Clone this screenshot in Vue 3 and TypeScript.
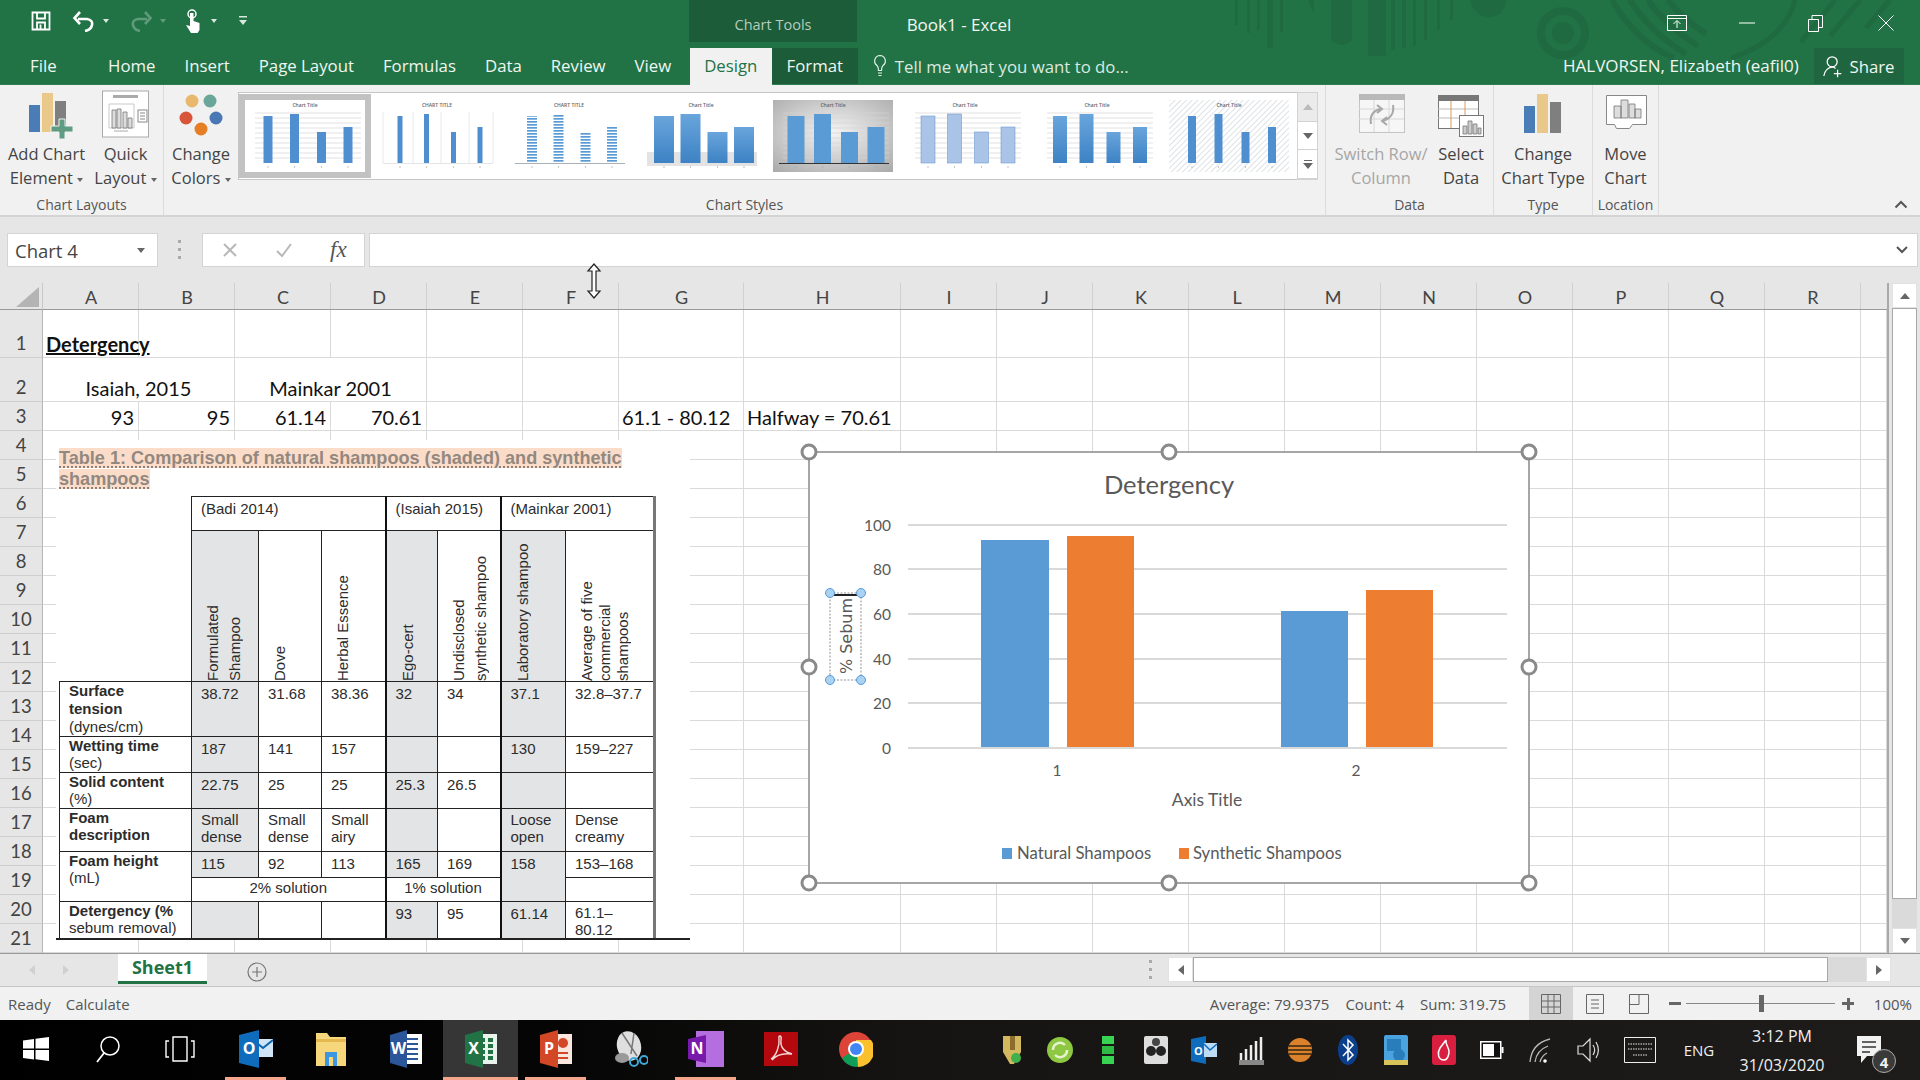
<script setup lang="ts">
interface Thumb {
  title: string
  barW: number
  fill: string
  stroke?: string
  bg: string
  hgrid?: boolean
  vgrid?: boolean
  base?: string
  shadow?: boolean
  selected?: boolean
}

const thumbs: Thumb[] = [
  { title: 'Chart Title', barW: 9, fill: '#4f8fd0', bg: '#fff', hgrid: true, selected: true },
  { title: 'CHART TITLE', barW: 5, fill: '#4f8fd0', bg: '#fff', vgrid: true, base: '#e4e4e4' },
  { title: 'CHART TITLE', barW: 10, fill: 'url(#stripes)', bg: '#fff', base: '#a8b0b8' },
  { title: 'Chart Title', barW: 20, fill: 'url(#barGrad)', bg: '#fff', shadow: true },
  { title: 'Chart Title', barW: 17, fill: '#5b9bd5', bg: 'url(#greyBg)', hgrid: true, base: '#333' },
  { title: 'Chart Title', barW: 14, fill: '#a9c4e6', stroke: '#6f9bd0', bg: '#fff', hgrid: true },
  { title: 'Chart Title', barW: 14, fill: 'url(#barGrad)', bg: '#fff', hgrid: true },
  { title: 'Chart Title', barW: 8, fill: '#4f8fd0', bg: 'url(#hatch)' },
]
const barX = [23, 49.5, 76.5, 103]
const barH = [47, 49, 31, 36]
const thumbGrid = [13, 18, 23, 28, 33, 38, 43, 48, 53, 58]

const colW = ['A', 'B', 'C', 'D', 'E', 'F', 'G', 'H', 'I', 'J', 'K', 'L', 'M', 'N', 'O', 'P', 'Q', 'R', '']
const headers = colW.map((c, i) => ({ c, i }))

const content: Record<string, { t: string; cls?: string }> = {
  'A1': { t: 'Detergency', cls: 'heading' },
  'A2': { t: 'Isaiah, 2015', cls: 'across' },
  'C2': { t: 'Mainkar 2001', cls: 'across' },
  'A3': { t: '93', cls: 'num' },
  'B3': { t: '95', cls: 'num' },
  'C3': { t: '61.14', cls: 'num' },
  'D3': { t: '70.61', cls: 'num' },
  'G3': { t: '61.1 - 80.12' },
  'H3': { t: 'Halfway = 70.61' },
}

const rows = Array.from({ length: 21 }, (_, r) => {
  const num = r + 1
  const cells = colW
    .map((c, i) => ({ key: `${c || 'S'}${num}`, i, ...(content[`${c}${num}`] ?? { t: '' }) }))
    .filter((cell) => !(num === 2 && (cell.i === 1 || cell.i === 3)))
  return { num, cells }
})

const gridY = [525, 569, 614, 659, 703, 748]
const handles = [
  [809, 452], [1169, 452], [1529, 452],
  [809, 667], [1529, 667],
  [809, 883], [1169, 883], [1529, 883],
]
const axisLabels = [
  { v: '100', y: 531 }, { v: '80', y: 575 }, { v: '60', y: 620 },
  { v: '40', y: 665 }, { v: '20', y: 709 }, { v: '0', y: 754 },
]
const bars = [
  { x: 981, w: 68, y: 540, fill: '#5b9bd5' },
  { x: 1067, w: 67, y: 536, fill: '#ed7d31' },
  { x: 1281, w: 67, y: 611, fill: '#5b9bd5' },
  { x: 1366, w: 67, y: 590, fill: '#ed7d31' },
]
const titleHandles = [[830, 593], [861, 593], [830, 680], [861, 680]]

const tableRows = [
  { label: 'Wetting time (sec)', vals: ['187', '141', '157', '', '', '130', '159–227'], cls: 'r-wet' },
  { label: 'Solid content (%)', vals: ['22.75', '25', '25', '25.3', '26.5', '', ''], cls: 'r-solid' },
]
const headCols = [
  { lines: ['Formulated', 'Shampoo'], grey: true },
  { lines: ['Dove'], grey: false },
  { lines: ['Herbal Essence'], grey: false, thick: true },
  { lines: ['Ego-cert'], grey: true },
  { lines: ['Undisclosed', 'synthetic shampoo'], grey: false, thick: true },
  { lines: ['Laboratory shampoo'], grey: true },
  { lines: ['Average of five', 'commercial', 'shampoos'], grey: false },
]
const isGrey = (i: number) => i === 0 || i === 3 || i === 5
const isThick = (i: number) => i === 2 || i === 4

const trayStart = ['shield', 'sync', 'bars']
</script>

<template>
  <div class="app">
    <div class="head">
      <svg class="pattern" viewBox="1200 0 720 85" width="720" height="85">
        <g fill="#1f6a40">
          <rect x="1235" width="3" height="25" /><rect x="1247" width="3" height="33" />
          <rect x="1257" width="3" height="30" /><rect x="1267" width="6" height="48" />
          <rect x="1280" width="3" height="32" /><path d="M1308 0h6v14z" />
          <path d="M1331 0h21v40q-10 10-21 0z" /><rect x="1368" width="18" height="56" />
          <rect x="1391" width="4" height="50" /><rect x="1402" width="4" height="48" />
          <rect x="1413" width="3" height="46" /><rect x="1424" width="3" height="40" />
          <rect x="1437" width="3" height="30" /><rect x="1450" width="3" height="20" />
          <path d="M1470 0h37q-4 17-18 17t-19-17z" />
          <circle cx="1563" cy="33" r="11" />
        </g>
        <g fill="none" stroke="#1f6a40">
          <circle cx="1563" cy="33" r="22" stroke-width="8" />
          <path d="M1612 0q24 42 62 58M1630 0q20 32 56 54M1648 0q16 24 50 46M1668 0q12 16 38 34" stroke-width="6" />
          <path d="M1795 0q-10 40-64 58M1835 0l-34 42M1860 0l-30 36M1890 0l-24 28" stroke-width="5" />
        </g>
      </svg>
      <!-- title bar -->
      <header class="titlebar">
        <div class="qat">
          <svg class="qi" viewBox="0 0 22 22" width="22" height="22"><path d="M2.500 2.500h17v17h-17zM7 2.500v6h8v-6M7 19.500v-7h8v7M10.500 14.500v5" fill="none" stroke="#fff" stroke-width="1.800" /></svg>
          <svg class="qi-undo" viewBox="0 0 24 22" width="24" height="22"><path d="M6 9h9q6 1 5 6t-7 6M8 2L2.500 8 8 14" fill="none" stroke="#fff" stroke-width="2.600" /></svg>
          <i class="caret" />
          <svg class="qi-undo" viewBox="0 0 24 22" width="24" height="22"><path d="M18 9H9q-6 1-5 6t7 6M16 2l5.500 6L16 14" fill="none" stroke="#5f9b7b" stroke-width="2.600" /></svg>
          <i class="caret dim" />
          <svg class="qi-touch" viewBox="0 0 20 26" width="20" height="26"><circle cx="8" cy="6" r="4" fill="none" stroke="#fff" stroke-width="1.500" /><path d="M6 5h3.500v8l6 2v7l-2 3H7l-5-8 4 1z" fill="#fff" /></svg>
          <i class="caret" />
          <svg class="qi-more" viewBox="0 0 10 12" width="10" height="12"><path d="M1 1h8v1.500H1zM1 5h8L5 10z" fill="#d8e8de" /></svg>
        </div>
        <div class="context-head">Chart Tools</div>
        <div class="doc-title">Book1 - Excel</div>
        <div class="winctl">
          <svg viewBox="0 0 20 16" width="20" height="16"><path d="M.5.500h19v15H.5zM.5 3.500h19M10 13V6M6.500 9L10 5.500 13.500 9" fill="none" stroke="#fff" /></svg>
          <svg class="wc-min" viewBox="0 0 16 2" width="16" height="2"><path d="M0 1h16" stroke="#dcebe2" stroke-width="1.200" /></svg>
          <svg class="wc-res" viewBox="0 0 15 17" width="15" height="17"><path d="M.5 4.500h10v12H.5zM4 4.500V.5h10.500v12h-4" fill="none" stroke="#fff" /></svg>
          <svg class="wc-close" viewBox="0 0 16 16" width="16" height="16"><path d="M.5.500l15 15M15.500.500l-15 15" stroke="#fff" stroke-width="1" /></svg>
        </div>
      </header>

      <!-- tabs -->
      <nav class="tabs">
        <span class="tab file">File</span>
        <span class="tab">Home</span>
        <span class="tab">Insert</span>
        <span class="tab">Page Layout</span>
        <span class="tab">Formulas</span>
        <span class="tab">Data</span>
        <span class="tab">Review</span>
        <span class="tab">View</span>
        <span class="tab design">Design</span>
        <span class="tab format">Format</span>
        <span class="tell">
          <svg viewBox="0 0 14 24" width="14" height="24"><path d="M7 1.500a5.500 5.500 0 0 0-3 10c1 1 1.500 2.500 1.500 5h3c0-2.500.5-4 1.500-5a5.500 5.500 0 0 0-3-10zM5 19h4M5.500 21.500h3" fill="none" stroke="#e4f0e9" stroke-width="1.200" /></svg>
          Tell me what you want to do...
        </span>
        <span class="user">HALVORSEN, Elizabeth (eafil0)</span>
        <span class="share">
          <svg viewBox="0 0 24 28" width="24" height="28"><circle cx="11" cy="9" r="6" fill="none" stroke="#fff" stroke-width="1.500" /><path d="M1 26c1-7 5-10 10-11 2 0 3 1 4 2M13 23h9M17.500 18.500v9" fill="none" stroke="#fff" stroke-width="1.500" /></svg>
          Share
        </span>
      </nav>
    </div>

    <!-- ribbon -->
    <section class="ribbon">
      <div class="grp g-layouts">
        <div class="grp-body">
          <div class="rb w-add">
            <svg class="rb-ic" viewBox="20 92 52 48" width="52" height="48">
              <rect x="28" y="107" width="11" height="27" fill="#4a7db5" /><rect x="41" y="95" width="11" height="39" fill="#eac88a" /><rect x="54" y="103" width="11" height="31" fill="#7f7f7f" />
              <path d="M58 121h6v7h8v6h-8v7h-6v-7h-8v-6h8z" fill="#5e9c83" stroke="#f1f1f1" />
            </svg>
            <span>Add Chart<br />Element <i class="dd" /></span>
          </div>
          <div class="rb w-quick">
            <svg class="rb-ic" viewBox="101 90 48 48" width="48" height="48">
              <rect x="101.500" y="91" width="46" height="46" fill="#fff" stroke="#aaa" />
              <rect x="112" y="95" width="25" height="3" fill="#aaa" />
              <path d="M108 104h25v24h-25z" fill="none" stroke="#bbb" stroke-width=".8" />
              <path d="M111 110h4v18h-4zM116 109h4v19h-4zM122 112h4v16h-4zM127 118h4v10h-4z" fill="#ddd" stroke="#777" stroke-width=".8" />
              <rect x="137" y="110" width="9" height="12" fill="#fff" stroke="#888" /><path d="M139 113h5M139 116h5M139 119h5" stroke="#888" />
              <path d="M113 131h14" stroke="#aaa" />
            </svg>
            <span>Quick<br />Layout <i class="dd" /></span>
          </div>
        </div>
        <div class="grp-label">Chart Layouts</div>
      </div>

      <div class="grp g-styles">
        <div class="grp-body">
          <div class="rb w-colors">
            <svg class="rb-ic" viewBox="180 90 46 48" width="46" height="48">
              <circle cx="194" cy="101" r="6.500" fill="#e8b96c" /><circle cx="212" cy="101" r="6.500" fill="#6aa79a" />
              <circle cx="188" cy="118" r="6.500" fill="#d9553a" /><circle cx="218" cy="118" r="6.500" fill="#4a78b5" />
              <circle cx="203" cy="129" r="6.500" fill="#e57e25" />
            </svg>
            <span>Change<br />Colors <i class="dd" /></span>
          </div>
          <div class="gallery">
            <div class="gallery-items">
              <div v-for="(t, i) in thumbs" :key="i" class="thumb-wrap" :class="{ selected: t.selected }">
                <svg class="thumb" viewBox="0 0 120 72" width="120" height="72">
                  <rect width="120" height="72" :fill="t.bg" />
                  <text x="60" y="7" text-anchor="middle" class="thumb-title">{{ t.title }}</text>
                  <rect v-if="t.shadow" x="6" y="52" width="110" height="14" fill="#e3e3e3" />
                  <template v-if="t.hgrid">
                    <line v-for="g in thumbGrid" :key="g" x1="10" x2="116" :y1="g" :y2="g" stroke="#d4d4d4" stroke-width=".7" />
                  </template>
                  <template v-if="t.vgrid">
                    <line v-for="x in [6, 36, 64, 92, 116]" :key="x" :x1="x" :x2="x" y1="12" y2="63" stroke="#e2e2e2" stroke-width=".8" />
                  </template>
                  <rect v-for="(x, b) in barX" :key="b" :x="x - t.barW / 2" :y="63 - barH[b]" :width="t.barW" :height="barH[b]" :fill="t.fill" :stroke="t.stroke" stroke-width=".6" />
                  <line v-if="t.base" x1="6" x2="116" y1="63.500" y2="63.500" :stroke="t.base" stroke-width="1.200" />
                  <circle v-for="(x, b) in barX" :key="'d' + b" :cx="x" cy="67" r=".7" fill="#aaa" />
                </svg>
              </div>
            </div>
            <div class="gallery-scroll">
              <span class="gs up"><i class="tri-up" /></span>
              <span class="gs"><i class="tri-down" /></span>
              <span class="gs"><i class="more" /><i class="tri-down" /></span>
            </div>
          </div>
        </div>
        <div class="grp-label">Chart Styles</div>
      </div>

      <div class="grp g-data">
        <div class="grp-body">
          <div class="rb w-switch disabled">
            <svg class="rb-ic" viewBox="1355 92 50 46" width="50" height="46">
              <rect x="1358.500" y="95.500" width="45" height="38" fill="#f6f6f6" stroke="#c4c4c4" />
              <rect x="1358" y="95" width="46" height="6" fill="#b9b9b9" />
              <path d="M1358 110h45M1358 120h45M1373 101v32M1388 101v32" stroke="#d8d8d8" />
              <path d="M1370 125q-2-12 9-15M1392 106q2 12-10 16M1376 106l5 4-5 4M1386 118l-5 4 5 4" fill="none" stroke="#a8a8a8" stroke-width="2" />
            </svg>
            <span>Switch Row/<br />Column</span>
          </div>
          <div class="rb w-select">
            <svg class="rb-ic" viewBox="1438 92 50 48" width="50" height="48">
              <rect x="1440.500" y="97.500" width="40" height="33" fill="#fff" stroke="#777" />
              <rect x="1440" y="97" width="41" height="6" fill="#777" />
              <path d="M1440 111h40M1440 120h40" stroke="#bbb" /><path d="M1453 103v27M1467 103v27" stroke="#d89a5a" />
              <rect x="1461.500" y="117.500" width="24" height="21" fill="#fff" stroke="#777" />
              <path d="M1465 136v-8h4v8zM1470 136v-13h4v13zM1475 136v-10h4v10zM1480 136v-6h3v6z" fill="#ccc" stroke="#777" stroke-width=".8" />
            </svg>
            <span>Select<br />Data</span>
          </div>
        </div>
        <div class="grp-label">Data</div>
      </div>

      <div class="grp g-type">
        <div class="grp-body">
          <div class="rb w-type">
            <svg class="rb-ic" viewBox="1520 92 46 46" width="46" height="46">
              <rect x="1524" y="107" width="11" height="27" fill="#4a7db5" /><rect x="1537" y="95" width="11" height="39" fill="#eac88a" /><rect x="1550" y="103" width="11" height="31" fill="#7f7f7f" />
            </svg>
            <span>Change<br />Chart Type</span>
          </div>
        </div>
        <div class="grp-label">Type</div>
      </div>

      <div class="grp g-loc">
        <div class="grp-body">
          <div class="rb w-move">
            <svg class="rb-ic" viewBox="1602 94 46 44" width="46" height="44">
              <path d="M1605.500 97.500h40v29h-14l-3 4h-13l-2-4h-8z" fill="#fff" stroke="#888" />
              <path d="M1613 120v-12h7v12zM1620 120v-18h7v18zM1628 120v-14h6v14zM1634 120v-9h6v9z" fill="#ddd" stroke="#777" stroke-width=".8" />
            </svg>
            <span>Move<br />Chart</span>
          </div>
        </div>
        <div class="grp-label">Location</div>
      </div>
      <svg class="collapse" viewBox="0 0 14 10" width="14" height="10"><path d="M1.500 8.500L7 3l5.500 5.500" fill="none" stroke="#555" stroke-width="2" /></svg>
    </section>

    <!-- formula bar -->
    <section class="formula">
      <div class="namebox"><span>Chart 4</span><i class="tri-down" /></div>
      <span class="dots" />
      <div class="fx-btns">
        <svg viewBox="0 0 16 16" width="16" height="16"><path d="M2 2l12 12M14 2L2 14" stroke="#b8b8b8" stroke-width="2" /></svg>
        <svg viewBox="0 0 18 16" width="18" height="16"><path d="M2 9l5 5L16 2" fill="none" stroke="#b8b8b8" stroke-width="2" /></svg>
        <span class="fx">fx</span>
      </div>
      <div class="fx-input">
        <svg viewBox="0 0 12 8" width="12" height="8"><path d="M1 1l5 5 5-5" fill="none" stroke="#555" stroke-width="2" /></svg>
      </div>
    </section>

    <!-- grid -->
    <section class="sheet-area">
      <div class="sheet">
        <div class="corner"><i /></div>
        <div v-for="h in headers" :key="'h' + h.i" class="colhead">{{ h.c }}</div>
        <template v-for="row in rows" :key="row.num">
          <div class="rowhead">{{ row.num }}</div>
          <div
            v-for="cell in row.cells"
            :key="cell.key"
            class="cell"
            :class="cell.cls"
          ><span>{{ cell.t }}</span></div>
        </template>
      </div>
      <div class="vscroll">
        <span class="sb-btn"><i class="tri-up" /></span>
        <span class="sb-thumb" />
        <span class="sb-track" />
        <span class="sb-btn"><i class="tri-down" /></span>
      </div>

      <!-- pasted picture -->
      <div class="picture">
        <p class="caption"><mark>Table 1: Comparison of natural shampoos (shaded) and synthetic<br />shampoos</mark></p>
        <table class="paper">
          <colgroup>
            <col class="c0" /><col class="c1" /><col class="c2" /><col class="c3" /><col class="c4" /><col class="c5" /><col class="c6" /><col class="c7" />
          </colgroup>
          <tbody>
            <tr class="r-a">
              <td rowspan="2" class="blank" />
              <td colspan="3" class="thick">(Badi 2014)</td>
              <td colspan="2" class="thick">(Isaiah 2015)</td>
              <td colspan="2">(Mainkar 2001)</td>
            </tr>
            <tr class="r-b">
              <td v-for="(h, i) in headCols" :key="i" class="rot" :class="{ grey: h.grey, thick: h.thick }">
                <div class="rot-in" :class="{ wide: h.lines.length === 2 }"><span v-for="l in h.lines" :key="l">{{ l }}</span></div>
              </td>
            </tr>
            <tr class="r-surface">
              <th>Surface<br />tension<br /><em>(dynes/cm)</em></th>
              <td class="grey">38.72</td><td>31.68</td><td class="thick">38.36</td><td class="grey">32</td><td class="thick">34</td><td class="grey">37.1</td><td>32.8–37.7</td>
            </tr>
            <tr v-for="tr in tableRows" :key="tr.label" :class="tr.cls">
              <th>{{ tr.label.split(' (')[0] }}<br /><em>({{ tr.label.split(' (')[1] }}</em></th>
              <td v-for="(v, i) in tr.vals" :key="i" :class="{ grey: isGrey(i), thick: isThick(i) }">{{ v }}</td>
            </tr>
            <tr class="r-foam">
              <th>Foam<br />description</th>
              <td class="grey two">Small<br />dense</td><td class="two">Small<br />dense</td><td class="thick two">Small<br />airy</td><td class="grey" /><td class="thick" /><td class="grey two">Loose<br />open</td><td class="two">Dense<br />creamy</td>
            </tr>
            <tr class="r-height">
              <th rowspan="2">Foam height<br /><em>(mL)</em></th>
              <td class="grey">115</td><td>92</td><td class="thick">113</td><td class="grey">165</td><td class="thick">169</td><td rowspan="2" class="grey">158</td><td>153–168</td>
            </tr>
            <tr class="r-sol">
              <td colspan="3" class="thick ctr">2% solution</td><td colspan="2" class="thick ctr">1% solution</td><td />
            </tr>
            <tr class="r-det">
              <th>Detergency (%<br /><em>sebum removal)</em></th>
              <td class="grey" /><td /><td class="thick" /><td class="grey">93</td><td class="thick">95</td><td class="grey">61.14</td><td class="two">61.1–<br />80.12</td>
            </tr>
          </tbody>
        </table>
      </div>

      <!-- chart object -->
      <svg class="chart" viewBox="790 432 760 470" width="760" height="470">
        <rect x="809" y="452" width="720" height="431" fill="#fff" stroke="#a6a6a6" stroke-width="2" />
        <text x="1169" y="494" text-anchor="middle" class="c-title">Detergency</text>
        <line v-for="y in gridY" :key="y" x1="908" x2="1507" :y1="y" :y2="y" stroke="#d9d9d9" stroke-width="2" />
        <text v-for="a in axisLabels" :key="a.v" x="891" :y="a.y" text-anchor="end" class="c-tick">{{ a.v }}</text>
        <rect v-for="b in bars" :key="b.x" :x="b.x" :y="b.y" :width="b.w" :height="747 - b.y" :fill="b.fill" />
        <text x="1057" y="776" text-anchor="middle" class="c-tick">1</text>
        <text x="1356" y="776" text-anchor="middle" class="c-tick">2</text>
        <text x="1207" y="806" text-anchor="middle" class="c-axis">Axis Title</text>
        <rect x="1002" y="848" width="10" height="11" fill="#5b9bd5" />
        <text x="1017" y="859" class="c-legend">Natural Shampoos</text>
        <rect x="1179" y="848" width="10" height="11" fill="#ed7d31" />
        <text x="1193" y="859" class="c-legend">Synthetic Shampoos</text>
        <rect x="830" y="593" width="31" height="87" fill="none" stroke="#777" stroke-width=".8" stroke-dasharray="2 1.500" />
        <text x="851.500" y="636" text-anchor="middle" transform="rotate(-90 851.500 636)" class="c-sebum">% Sebum</text>
        <line x1="834" x2="857" y1="595" y2="595" stroke="#222" stroke-width="2" />
        <circle v-for="t in titleHandles" :key="t.join()" :cx="t[0]" :cy="t[1]" r="4.500" fill="#a9d2f3" stroke="#5b9bd5" />
        <circle v-for="h in handles" :key="h.join()" :cx="h[0]" :cy="h[1]" r="7" fill="#fff" stroke="#8a8a8a" stroke-width="3" />
      </svg>
    </section>

    <!-- sheet tabs -->
    <section class="sheetbar">
      <div class="tabnav"><i class="tri-left pale" /><i class="tri-right pale" /></div>
      <div class="sheettab">Sheet1</div>
      <svg class="addsheet" viewBox="0 0 20 20" width="20" height="20"><circle cx="10" cy="10" r="9" fill="none" stroke="#777" stroke-width="1.200" /><path d="M10 5v10M5 10h10" stroke="#777" stroke-width="1.200" /></svg>
      <div class="hscroll">
        <span class="hdots" />
        <span class="sb-btn h"><i class="tri-left" /></span>
        <span class="h-thumb" />
        <span class="h-track" />
        <span class="sb-btn h"><i class="tri-right" /></span>
      </div>
    </section>

    <!-- status bar -->
    <footer class="status">
      <span class="st-ready">Ready</span>
      <span class="st-calc">Calculate</span>
      <span class="st-stats">
        <span>Average: 79.9375</span><span>Count: 4</span><span>Sum: 319.75</span>
      </span>
      <span class="view active">
        <svg viewBox="0 0 20 20" width="20" height="20"><path d="M.5.500h19v19H.5zM.5 7h19M.5 13h19M7 .5v19M13 .5v19" fill="none" stroke="#666" /></svg>
      </span>
      <span class="view">
        <svg viewBox="0 0 18 20" width="18" height="20"><path d="M.5.500h17v19H.5zM5 6h8M5 10h8M5 14h8" fill="none" stroke="#666" /></svg>
      </span>
      <span class="view">
        <svg viewBox="0 0 20 20" width="20" height="20"><path d="M.5.500h19v19H.5zM10 .5v10H.5" fill="none" stroke="#666" /></svg>
      </span>
      <div class="zoom">
        <b class="z-minus" /><span class="z-track"><i class="z-thumb" /></span><b class="z-plus" />
      </div>
      <span class="pct">100%</span>
    </footer>

    <!-- task bar -->
    <footer class="taskbar">
      <div class="task-left">
        <span class="tb sys">
          <svg viewBox="0 0 26 24" width="26" height="24"><path d="M0 3.500l11-1.500v9.500H0zM12.500 1.800L26 0v11.500H12.500zM0 13h11v9.500L0 21zM12.500 13H26v11l-13.500-1.800z" fill="#fff" /></svg>
        </span>
        <span class="tb sys">
          <svg viewBox="0 0 26 28" width="26" height="28"><circle cx="15" cy="11" r="9" fill="none" stroke="#fff" stroke-width="1.500" /><path d="M9 18L2 27" stroke="#fff" stroke-width="1.800" /></svg>
        </span>
        <span class="tb sys">
          <svg viewBox="0 0 30 26" width="30" height="26"><path d="M8 1h14v24H8zM4 5H1v16h3M26 5h3v16h-3" fill="none" stroke="#fff" stroke-width="1.400" /></svg>
        </span>
        <span class="tb app-ic on first">
          <svg viewBox="0 0 34 38" width="34" height="38"><rect x="14" y="9" width="20" height="18" fill="#cfe4f7" /><path d="M14 10l10 8 10-8" fill="none" stroke="#0a64ad" stroke-width="2" /><path d="M0 5l20-5v38L0 33z" fill="#0f6cbd" /><text x="10" y="24" text-anchor="middle" class="ti w">O</text></svg>
        </span>
        <span class="tb app-ic">
          <svg viewBox="0 0 32 36" width="32" height="36"><path d="M1 2h11l3 4h16v29H1z" fill="#f6d77c" /><path d="M1 8h30v3H1z" fill="#e5b94f" /><path d="M10 35V21h12v14h-4v-9h-4v9z" fill="#3d97e0" /></svg>
        </span>
        <span class="tb app-ic">
          <svg viewBox="0 0 32 38" width="32" height="38"><path d="M10 4h22v30H10z" fill="#fff" /><path d="M14 9h14M14 14h14M14 19h14M14 24h14M14 29h14" stroke="#2b579a" stroke-width="2" /><path d="M0 5l17-5v38L0 33z" fill="#2b579a" /><text x="8.500" y="24" text-anchor="middle" class="ti w">W</text></svg>
        </span>
        <span class="tb app-ic on active">
          <svg viewBox="0 0 32 38" width="32" height="38"><path d="M12 4h20v30H12z" fill="#e8f3ec" /><path d="M16 8h4v4h-4zM23 8h5v4h-5zM16 14h4v4h-4zM23 14h5v4h-5zM16 20h4v4h-4zM23 20h5v4h-5zM16 26h4v4h-4zM23 26h5v4h-5z" fill="#217346" /><path d="M0 5l18-5v38L0 33z" fill="#217346" /><text x="8.500" y="24" text-anchor="middle" class="ti w">X</text></svg>
        </span>
        <span class="tb app-ic on">
          <svg viewBox="0 0 32 38" width="32" height="38"><path d="M12 4h20v30H12z" fill="#f8e6df" /><circle cx="23" cy="13" r="5" fill="#d24726" /><path d="M16 23h12M16 28h12" stroke="#d24726" stroke-width="2" /><path d="M0 5l18-5v38L0 33z" fill="#d24726" /><text x="9" y="24" text-anchor="middle" class="ti w">P</text></svg>
        </span>
        <span class="tb app-ic">
          <svg viewBox="0 0 34 38" width="34" height="38"><ellipse cx="15" cy="16" rx="12" ry="15" fill="#dfdfdf" transform="rotate(-15 15 16)" /><ellipse cx="8" cy="28" rx="7" ry="5" fill="#999" /><path d="M8 3l15 23M20 3L17 24" stroke="#777" stroke-width="1.500" /><circle cx="20" cy="32" r="4" fill="none" stroke="#3fa7d6" stroke-width="2" /><circle cx="30" cy="30" r="4" fill="none" stroke="#3fa7d6" stroke-width="2" /></svg>
        </span>
        <span class="tb app-ic on">
          <svg viewBox="0 0 36 36" width="36" height="36"><rect x="8" width="28" height="36" fill="#b46ee0" /><path d="M0 8l18-4v28L0 28z" fill="#7719aa" /><text x="9" y="23" text-anchor="middle" class="ti w">N</text></svg>
        </span>
        <span class="tb app-ic">
          <svg viewBox="0 0 34 34" width="34" height="34"><rect width="34" height="34" fill="#b3080e" /><path d="M7 27c5-3 9-13 8-21-1-3 3-3 2 2-1 8 4 12 11 14-8-1-16 1-20 6" fill="none" stroke="#f4d6d6" stroke-width="1.400" /></svg>
        </span>
        <span class="tb app-ic">
          <svg viewBox="0 0 34 36" width="34" height="36"><circle cx="17" cy="18" r="17" fill="#db4437" /><path d="M17 18L3 27a17 17 0 0 0 14 9c4 0 8-1 11-4z" fill="#0f9d58" /><path d="M17 9h15a17 17 0 0 1-13 27z" fill="#fbc02d" /><circle cx="17" cy="18" r="8" fill="#fff" /><circle cx="17" cy="18" r="6" fill="#4285f4" /></svg>
        </span>
      </div>
      <div class="tray">
        <span class="ti-slot" v-for="name in trayStart" :key="name">
          <svg v-if="name === 'shield'" viewBox="0 0 24 30" width="24" height="30"><path d="M3 1h18v16l-7 12h-4L3 17z" fill="#d2b85e" /><path d="M10 1h5v14h-5z" fill="#8c6d2c" /><circle cx="16" cy="23" r="5" fill="#3fb04a" /></svg>
          <svg v-else-if="name === 'sync'" viewBox="0 0 28 28" width="28" height="28"><circle cx="14" cy="14" r="13" fill="#8ec742" /><path d="M7 14a7 7 0 0 1 12-5M21 14a7 7 0 0 1-12 5" fill="none" stroke="#e6f3cf" stroke-width="2.500" /></svg>
          <svg v-else viewBox="0 0 14 30" width="14" height="30"><rect x="1" y="1" width="12" height="8" fill="#39d353" /><rect x="1" y="11" width="12" height="8" fill="#2dbb45" /><rect x="1" y="21" width="12" height="8" fill="#39d353" /></svg>
        </span>
        <span class="ti-slot"><svg viewBox="0 0 24 28" width="24" height="28"><rect width="24" height="28" rx="2" fill="#ddd" /><circle cx="7" cy="15" r="5" fill="#222" /><circle cx="17" cy="15" r="5" fill="#222" /><circle cx="12" cy="6" r="4" fill="#444" /></svg></span>
        <span class="ti-slot"><svg viewBox="0 0 26 28" width="26" height="28"><path d="M0 3l15-3v28L0 25z" fill="#0f6cbd" /><rect x="13" y="7" width="13" height="14" fill="#bcdcf5" /><path d="M13 8l6 6 7-6" fill="none" stroke="#0f6cbd" stroke-width="1.500" /><text x="7.500" y="19" text-anchor="middle" class="ti w small">O</text></svg></span>
        <span class="ti-slot"><svg viewBox="0 0 26 30" width="26" height="30"><path d="M2 18v8M7 14v12M12 10v16M17 6v20M22 2v24" stroke="#eee" stroke-width="2.500" /><rect y="25" width="25" height="5" fill="#888" /></svg></span>
        <span class="ti-slot"><svg viewBox="0 0 26 26" width="26" height="26"><circle cx="13" cy="13" r="12" fill="#d9822b" /><path d="M2 9h22M1 13h24M2 17h22" stroke="#5b3b16" stroke-width="2" /></svg></span>
        <span class="ti-slot"><svg viewBox="0 0 20 30" width="20" height="30"><ellipse cx="10" cy="15" rx="10" ry="15" fill="#0b3f8c" /><path d="M5 9l10 11-5 5V5l5 5L5 21" fill="none" stroke="#fff" stroke-width="1.500" /></svg></span>
        <span class="ti-slot"><svg viewBox="0 0 24 30" width="24" height="30"><rect width="24" height="30" rx="2" fill="#4aa3df" /><rect x="3" y="4" width="14" height="12" fill="#2a7dbb" /><circle cx="15" cy="20" r="6" fill="#2a7dbb" /><rect y="25" width="24" height="5" fill="#d8c25a" /></svg></span>
        <span class="ti-slot"><svg viewBox="0 0 24 30" width="24" height="30"><rect width="24" height="30" rx="3" fill="#d81f3f" /><path d="M12 25c-6 0-7-7-4-12l6-8c-1 5 4 8 3 13s-3 7-5 7z" fill="none" stroke="#fff" stroke-width="1.500" /></svg></span>
        <span class="ti-slot"><svg viewBox="0 0 24 18" width="24" height="18"><rect x=".75" y=".75" width="20" height="16.500" fill="#111" stroke="#fff" stroke-width="1.500" /><rect x="3" y="3" width="11" height="12" fill="#fff" /><rect x="21.500" y="6" width="2" height="6" fill="#fff" /></svg></span>
        <span class="ti-slot"><svg viewBox="0 0 24 26" width="24" height="26"><path d="M2 25C3 13 10 5 22 2M7 25c1-8 5-13 13-16M12 25c1-4 3-7 7-9" fill="none" stroke="#bbb" stroke-width="1.300" /><circle cx="17" cy="24" r="1.800" fill="#fff" /></svg></span>
        <span class="ti-slot"><svg viewBox="0 0 24 26" width="24" height="26"><path d="M2 9h5l7-7v22l-7-7H2zM17 8c2 3 2 7 0 10M20 5c3 5 3 11 0 16" fill="none" stroke="#ddd" stroke-width="1.200" /></svg></span>
        <span class="kbd-slot"><svg viewBox="0 0 32 26" width="32" height="26"><path d="M.5.500h31v25H.5z" fill="none" stroke="#eee" /><path d="M4 7h24M4 12h24M9 18h14" stroke="#eee" stroke-dasharray="1.500 1" /></svg></span>
        <span class="eng">ENG</span>
        <span class="clock"><span>3:12 PM</span><span>31/03/2020</span></span>
        <span class="notif">
          <svg viewBox="0 0 28 30" width="28" height="30"><path d="M1 1h24v20H11l-6 7v-7H1z" fill="#f2f2f2" /><path d="M6 7h14M6 12h14M6 17h8" stroke="#333" stroke-width="1.500" /></svg>
          <b>4</b>
        </span>
      </div>
    </footer>

    <svg class="ibeam" viewBox="0 0 18 36" width="18" height="36"><path d="M9 1l6 7h-4v20h4l-6 7-6-7h4V8H3z" fill="#fff" stroke="#222" stroke-width="1.200" /></svg>

    <svg class="defs" width="0" height="0">
      <defs>
        <pattern id="stripes" width="4" height="3" patternUnits="userSpaceOnUse"><rect width="4" height="1.700" fill="#5b9bd5" /></pattern>
        <pattern id="hatch" width="4" height="4" patternUnits="userSpaceOnUse" patternTransform="rotate(45)"><rect width="4" height="4" fill="#fff" /><rect width="1" height="4" fill="#dde2e6" /></pattern>
        <linearGradient id="barGrad" x1="0" y1="0" x2="0" y2="1"><stop offset="0" stop-color="#69a5dc" /><stop offset="1" stop-color="#3d82c4" /></linearGradient>
        <radialGradient id="greyBg" cx=".5" cy=".45" r=".75"><stop offset="0" stop-color="#f4f4f4" /><stop offset="1" stop-color="#a8a8a8" /></radialGradient>
      </defs>
    </svg>
  </div>
</template>

<style scoped>
.app {
  position: relative;
  width: 1920px;
  height: 1080px;
  overflow: hidden;
  display: flex;
  flex-direction: column;
  font-family: "Open Sans", "Liberation Sans", sans-serif;
  color: #444;
  background: #e6e6e6;
}
svg { display: block; flex: none; }
.defs { position: absolute; }

.head {
  position: relative;
  flex: none;
  background: #217346;
}
.pattern { position: absolute; left: 1200px; top: 0; }

/* title bar */
.titlebar {
  position: relative;
  height: 42px;
  display: flex;
  align-items: center;
  color: #fff;
}
.qat {
  display: flex;
  align-items: center;
  width: 689px;
  padding-left: 30px;
  box-sizing: border-box;
  height: 100%;
}
.qi-undo { margin-left: 20px; }
.caret {
  width: 0; height: 0;
  margin-left: 7px;
  border: 3px solid transparent;
  border-top: 4px solid #dbe9e0;
  border-bottom: 0;
}
.caret.dim { border-top-color: #5f9b7b; }
.qi-touch { margin-left: 18px; }
.qi-more { margin-left: 21px; }
.context-head {
  width: 168px;
  height: 100%;
  background: #1c5c38;
  color: #b6cdbf;
  font-size: 14.500px;
  line-height: 50px;
  text-align: center;
}
.doc-title {
  width: 204px;
  text-align: center;
  font-size: 17px;
  height: 100%;
  line-height: 50px;
  color: #f2f7f4;
}
.winctl {
  position: absolute;
  left: 1667px;
  top: 15px;
  display: flex;
  align-items: center;
  height: 16px;
}
.wc-min { margin-left: 52px; }
.wc-res { margin-left: 53px; }
.wc-close { margin-left: 55px; }

/* tabs */
.tabs {
  position: relative;
  height: 43px;
  display: flex;
  align-items: flex-end;
  color: #f0f6f2;
  font-size: 16.800px;
  box-sizing: border-box;
  border-bottom: 1px solid #2d7f52;
}
.tab {
  padding: 0 14.500px;
  line-height: 36px;
  height: 36px;
  white-space: nowrap;
}
.tab.file { padding-left: 30px; padding-right: 37px; }
.tab.design {
  margin-left: 4px;
  width: 82px;
  box-sizing: border-box;
  padding: 0;
  text-align: center;
  background: #f1f1f1;
  color: #217346;
  height: 37px;
  margin-bottom: -1px;
}
.tab.format {
  width: 86px;
  box-sizing: border-box;
  padding: 0;
  text-align: center;
  background: #1c5c38;
}
.tell {
  display: flex;
  align-items: center;
  gap: 8px;
  margin-left: 15px;
  height: 36px;
  color: #dbe9e0;
}
.user {
  position: absolute;
  left: 1563px;
  bottom: 0;
  line-height: 36px;
  font-size: 17px;
  white-space: nowrap;
}
.share {
  position: absolute;
  left: 1814px;
  bottom: 0;
  width: 90px;
  height: 36px;
  background: #1f6640;
  display: flex;
  align-items: center;
  justify-content: center;
  gap: 6px;
}
.share svg { width: 20px; height: 24px; }

/* ribbon */
.ribbon {
  position: relative;
  height: 132px;
  flex: none;
  box-sizing: border-box;
  background: #f1f1f1;
  border-bottom: 2px solid #d4d4d4;
  display: flex;
  font-size: 16.500px;
  color: #444;
}
.grp {
  box-sizing: border-box;
  height: 130px;
  padding-top: 3px;
  border-right: 1px solid #dcdcdc;
  display: flex;
  flex-direction: column;
}
.g-layouts { width: 164px; }
.g-styles { width: 1162px; }
.g-data { width: 168px; }
.g-type { width: 99px; }
.g-loc { width: 66px; }
.grp-body { flex: 1; display: flex; min-height: 0; }
.grp-label {
  height: 20px;
  line-height: 20px;
  text-align: center;
  font-size: 14px;
  color: #555;
  white-space: nowrap;
}
.rb {
  display: flex;
  flex-direction: column;
  align-items: center;
  text-align: center;
  line-height: 24px;
  white-space: nowrap;
  box-sizing: border-box;
}
.rb-ic { height: 52px; margin-bottom: 2px; }
.rb.disabled { color: #a6a6a6; }
.w-add { width: 93px; }
.w-quick { width: 65px; }
.w-colors { width: 74px; }
.w-switch { width: 110px; }
.w-select { width: 50px; }
.w-type { width: 98px; }
.w-move { width: 65px; }
.dd {
  display: inline-block;
  vertical-align: middle;
  width: 0; height: 0;
  border: 3.500px solid transparent;
  border-top: 4px solid #666;
  border-bottom: 0;
}
.gallery {
  display: flex;
  height: 88px;
  margin-top: 4px;
}
.gallery-items {
  width: 1059px;
  box-sizing: border-box;
  display: flex;
  padding: 1px 0 0;
  background: #fff;
  border: 1px solid #c6c6c6;
  border-width: 1px 0 1px 1px;
}
.thumb-wrap {
  width: 132px;
  height: 84px;
  box-sizing: border-box;
  padding: 6px;
  flex: none;
}
.thumb-wrap.selected { background: #c2c2c2; }
.thumb-title {
  font: 600 5px "Open Sans", sans-serif;
  fill: #666;
}
.gallery-scroll {
  width: 21px;
  display: flex;
  flex-direction: column;
  border: 1px solid #d2d2d2;
  box-sizing: border-box;
}
.gs {
  flex: 1;
  display: flex;
  flex-direction: column;
  gap: 2px;
  align-items: center;
  justify-content: center;
  background: #fff;
  border-bottom: 1px solid #d2d2d2;
}
.gs.up { background: #ebebeb; }
.gs.up .tri-up { border-bottom-color: #bbb; }
.more { width: 8px; height: 1px; background: #666; }
.collapse { position: absolute; left: 1894px; top: 114px; }

.tri-up, .tri-down, .tri-left, .tri-right {
  display: block;
  width: 0; height: 0;
  border: 5px solid transparent;
}
.tri-up { border-top: 0; border-bottom: 6px solid #666; }
.tri-down { border-bottom: 0; border-top: 6px solid #666; }
.tri-left { border-left: 0; border-right: 6px solid #666; }
.tri-right { border-right: 0; border-left: 6px solid #666; }
.tri-left.pale { border-right-color: #d0d0d0; }
.tri-right.pale { border-left-color: #d0d0d0; }

/* formula bar */
.formula {
  height: 66px;
  flex: none;
  box-sizing: border-box;
  padding-top: 16px;
  display: flex;
  align-items: flex-start;
  background: #e6e6e6;
}
.namebox {
  margin-left: 7px;
  width: 151px;
  height: 34px;
  box-sizing: border-box;
  background: #fff;
  border: 1px solid #d4d4d4;
  display: flex;
  align-items: center;
  justify-content: space-between;
  padding: 0 12px 0 7px;
  font-size: 18.500px;
}
.namebox .tri-down { border-width: 4px; border-top-width: 5px; border-bottom: 0; }
.dots {
  width: 3px;
  height: 20px;
  margin: 7px 21px 0 20px;
  background: repeating-linear-gradient(#aaa 0 3px, transparent 3px 8px);
}
.fx-btns {
  width: 163px;
  height: 34px;
  box-sizing: border-box;
  background: #fff;
  border: 1px solid #d4d4d4;
  display: flex;
  align-items: center;
  gap: 37px;
  padding-left: 19px;
}
.fx {
  font: italic 23px "Liberation Serif", serif;
  color: #555;
}
.fx-input {
  flex: 1;
  margin-left: 4px;
  margin-right: 2px;
  height: 34px;
  box-sizing: border-box;
  background: #fff;
  border: 1px solid #d4d4d4;
  display: flex;
  align-items: center;
  justify-content: flex-end;
  padding-right: 9px;
}

/* sheet */
.sheet-area {
  position: relative;
  height: 670px;
  flex: none;
  display: flex;
  background: #e6e6e6;
}
.sheet {
  width: 1889px;
  flex: none;
  display: grid;
  grid-template-columns: 43px repeat(6, 96px) 125px 157px repeat(10, 96px) 1fr;
  grid-template-rows: 27px 48px 44px repeat(18, 29px);
  background: #fff;
  font-family: Lato, "Liberation Sans", sans-serif;
  font-size: 20px;
  color: #111;
  border-right: 2px solid #a9a9a9;
  box-sizing: border-box;
  overflow: hidden;
}
.corner {
  background: #e6e6e6;
  border-bottom: 1px solid #9a9a9a;
  border-right: 1px solid #c8c8c8;
  position: relative;
}
.corner i {
  position: absolute;
  left: 16px;
  top: 4px;
  width: 23px;
  height: 20px;
  background: #b4b4b4;
  clip-path: polygon(100% 0, 100% 100%, 0 100%);
}
.colhead {
  background: #e6e6e6;
  border-bottom: 1px solid #9a9a9a;
  box-shadow: inset -1px 0 0 #d0d0d0;
  text-align: center;
  line-height: 29px;
  font-size: 18px;
  color: #444;
}
.colhead:nth-child(20) { box-shadow: none; }
.rowhead {
  background: #e6e6e6;
  border-right: 1px solid #b5b5b5;
  border-bottom: 1px solid #cfcfcf;
  text-align: center;
  font-size: 18.500px;
  color: #444;
  display: flex;
  align-items: flex-end;
  justify-content: center;
  box-sizing: border-box;
  line-height: 27px;
}
.cell {
  border-right: 1px solid #dadada;
  border-bottom: 1px solid #dadada;
  display: flex;
  align-items: flex-end;
  padding: 0 3px;
  line-height: 26px;
  white-space: nowrap;
  min-width: 0;
}
.cell.num { justify-content: flex-end; padding-right: 4px; }
.cell.across { grid-column: span 2; justify-content: center; }
.cell.heading span { font-weight: 700; text-decoration: underline; }
.vscroll {
  width: 25px;
  margin-left: 3px;
  display: flex;
  flex-direction: column;
  flex: none;
}
.sb-btn {
  height: 25px;
  flex: none;
  background: #fff;
  border: 1px solid #e2e2e2;
  box-sizing: border-box;
  display: flex;
  align-items: center;
  justify-content: center;
}
.sb-thumb {
  height: 591px;
  flex: none;
  background: #fff;
  border: 1px solid #a8a8a8;
  box-sizing: border-box;
}
.sb-track { height: 29px; flex: none; background: #dadada; }

/* picture */
.picture {
  position: absolute;
  left: 56px;
  top: 157px;
  width: 634px;
  height: 500px;
  box-sizing: border-box;
  background: #fff;
  padding: 8px 0 0 3px;
  border-bottom: 2px solid #222;
  font-family: "Liberation Sans", Arial, sans-serif;
  color: #2c2c2c;
  overflow: hidden;
}
.caption {
  margin: 0 0 6px;
  font-size: 18.100px;
  line-height: 21px;
  font-weight: 700;
  height: 42px;
  white-space: nowrap;
}
.caption mark {
  background: #fadcc9;
  color: #93887f;
  text-decoration: underline dotted #8a8077;
  text-underline-offset: 3px;
}
.paper {
  border-collapse: collapse;
  table-layout: fixed;
  width: 595px;
  font-size: 15px;
  line-height: 17px;
}
.c0 { width: 132px; }
.c1 { width: 67px; }
.c2 { width: 63px; }
.c3 { width: 64px; }
.c4 { width: 52px; }
.c5 { width: 63px; }
.c6 { width: 65px; }
.c7 { width: 89px; }
.paper td, .paper th {
  border: 1.500px solid #222;
  padding: 3px 0 0 9px;
  vertical-align: top;
  text-align: left;
  overflow: hidden;
}
.paper th {
  padding: 0 0 0 9px;
}
.paper th em { font-style: normal; font-weight: 400; }
.paper td.blank { border-width: 0 1.500px 1.500px 0; }
.paper td.grey { background: #e3e4e6; }
.paper td.thick { border-right: 2.500px solid #111; }
.paper td:last-child { border-right: 3px solid #777; }
.paper td.ctr { text-align: center; padding: 0; line-height: 20px; }
.paper td.two { padding-top: 2px; line-height: 17px; }
.r-a { height: 34px; }
.r-b { height: 151px; }
.r-surface { height: 54px; }
.r-surface th { line-height: 18px; padding-top: 0; }
.r-wet { height: 36px; }
.r-solid { height: 36px; }
.r-foam { height: 43px; }
.r-height { height: 26px; }
.r-sol { height: 24px; }
.r-det { height: 38px; }
.paper td.rot { padding: 0; vertical-align: bottom; }
.rot-in {
  writing-mode: vertical-rl;
  transform: rotate(180deg);
  height: 149px;
  width: fit-content;
  margin-left: 12px;
  line-height: 18px;
  white-space: nowrap;
}
.rot-in.wide { line-height: 22px; margin-left: 10px; }
.rot-in span { display: block; }

/* chart */
.chart {
  position: absolute;
  left: 790px;
  top: 149px;
}
.c-title { font: 25.500px Lato, sans-serif; fill: #595959; }
.c-tick { font: 15.500px Lato, sans-serif; fill: #595959; }
.c-axis { font: 17.500px Lato, sans-serif; fill: #595959; }
.c-legend { font: 16.700px Lato, sans-serif; fill: #595959; }
.c-sebum { font: 16px "DejaVu Sans", sans-serif; fill: #595959; }

/* sheet tabs */
.sheetbar {
  height: 34px;
  flex: none;
  display: flex;
  align-items: flex-start;
  background: #e6e6e6;
  border-top: 1px solid #9a9a9a;
  box-sizing: border-box;
  border-bottom: 1px solid #c6c6c6;
}
.tabnav {
  width: 118px;
  height: 100%;
  display: flex;
  align-items: center;
  gap: 28px;
  padding-left: 29px;
  box-sizing: border-box;
}
.sheettab {
  width: 89px;
  height: 30px;
  box-sizing: border-box;
  background: #fff;
  border-bottom: 3px solid #217346;
  color: #217346;
  font-weight: 700;
  font-size: 18px;
  line-height: 27px;
  text-align: center;
}
.addsheet { margin: 8px 0 0 40px; }
.hscroll {
  margin-left: auto;
  margin-right: 29px;
  display: flex;
  align-items: center;
  margin-top: 3px;
  height: 25px;
}
.hdots {
  width: 3px;
  height: 20px;
  margin-right: 16px;
  background: repeating-linear-gradient(#aaa 0 3px, transparent 3px 8px);
}
.sb-btn.h { width: 25px; }
.h-thumb {
  width: 635px;
  height: 25px;
  background: #fff;
  border: 1px solid #a8a8a8;
  box-sizing: border-box;
}
.h-track { width: 38px; height: 25px; background: #dadada; }

/* status */
.status {
  position: relative;
  height: 33px;
  flex: none;
  background: #f1f1f1;
  display: flex;
  align-items: center;
  font-size: 15px;
  color: #555;
}
.st-ready { margin-left: 8px; }
.st-calc { margin-left: 15px; }
.st-stats {
  display: flex;
  gap: 16px;
  margin-left: auto;
  margin-right: 23px;
}
.view {
  width: 44px;
  height: 100%;
  flex: none;
  display: flex;
  align-items: center;
  justify-content: center;
}
.view.active { background: #d4d4d4; }
.zoom {
  display: flex;
  align-items: center;
  margin-left: 8px;
}
.z-minus, .z-plus {
  position: relative;
  width: 12px;
  height: 3px;
  background: #666;
}
.z-plus::after {
  content: "";
  position: absolute;
  left: 4.500px;
  top: -4.500px;
  width: 3px;
  height: 12px;
  background: #666;
}
.z-track {
  position: relative;
  width: 149px;
  height: 1px;
  margin: 0 7px 0 5px;
  background: #888;
}
.z-thumb {
  position: absolute;
  left: 73px;
  top: -8px;
  width: 5px;
  height: 17px;
  background: #666;
}
.pct { width: 50px; margin-left: 8px; margin-right: 8px; text-align: right; flex: none; }

/* task bar */
.taskbar {
  height: 60px;
  flex: none;
  background: linear-gradient(90deg, #000 0, #050505 560px, #151412 900px, #1e1c1a 1920px);
  display: flex;
  align-items: stretch;
  color: #f0f0f0;
}
.task-left { display: flex; }
.tb {
  height: 60px;
  display: flex;
  align-items: center;
  justify-content: center;
  box-sizing: border-box;
  position: relative;
  padding-bottom: 3px;
}
.tb.sys { width: 72px; }
.tb.app-ic { width: 75px; }
.tb.first { margin-left: 2px; }
.tb.active { background: #363636; }
.tb.on::after {
  content: "";
  position: absolute;
  left: 7px;
  right: 7px;
  bottom: 0;
  height: 3px;
  background: #f4a58c;
}
.tb.active::after { left: 0; right: 0; }
.tray { margin-left: auto; display: flex; align-items: center; }
.ti-slot {
  width: 48px;
  display: flex;
  align-items: center;
  justify-content: center;
}
.kbd-slot { width: 56px; display: flex; justify-content: center; }
.eng { width: 62px; text-align: center; font-size: 15px; }
.clock {
  width: 104px;
  display: flex;
  flex-direction: column;
  align-items: center;
  gap: 9px;
  font-size: 16px;
  line-height: 20px;
}
.notif {
  position: relative;
  width: 86px;
  display: flex;
  padding-left: 22px;
  box-sizing: border-box;
}
.notif b {
  position: absolute;
  left: 38px;
  top: 14px;
  width: 24px;
  height: 24px;
  border-radius: 50%;
  background: #3a3a3a;
  border: 1px solid #aaa;
  text-align: center;
  font-size: 15px;
  line-height: 24px;
  box-sizing: border-box;
}
.ti { font: 700 16px "Open Sans", sans-serif; }
.ti.w { fill: #fff; }
.ti.small { font-size: 11px; }
.ibeam { position: absolute; left: 585px; top: 263px; }
</style>

<style>
html, body { margin: 0; background: #e6e6e6; overflow: hidden; }
</style>
